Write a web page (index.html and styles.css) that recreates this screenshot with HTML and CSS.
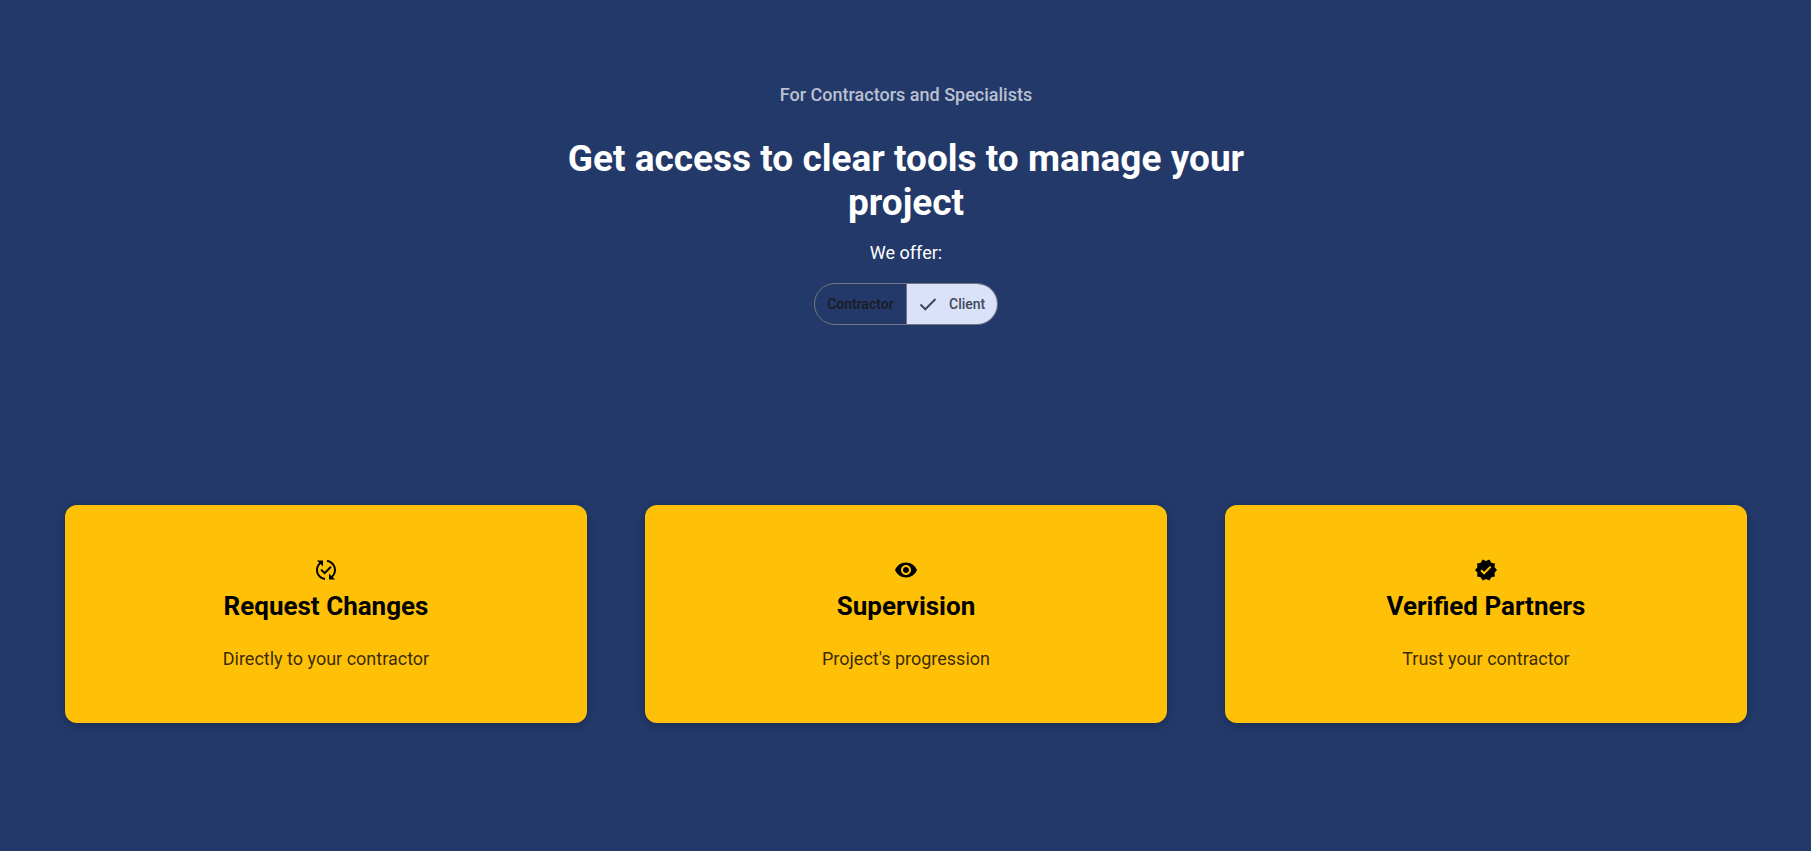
FILE: index.html
```html
<!DOCTYPE html>
<html lang="en">
<head>
<meta charset="utf-8">
<meta name="viewport" content="width=device-width, initial-scale=1">
<title>Tools for contractors and specialists</title>
<link rel="stylesheet" href="styles.css">
</head>
<body>
<main class="features">
  <header class="intro">
    <p class="eyebrow">For Contractors and Specialists</p>
    <h1 class="title">Get access to clear tools to manage your project</h1>
    <p class="offer">We offer:</p>
    <div class="toggle" role="group" aria-label="Audience">
      <button class="toggle-option" type="button" aria-pressed="false">Contractor</button>
      <button class="toggle-option selected" type="button" aria-pressed="true">
        <svg class="check" viewBox="0 0 18 18" aria-hidden="true"><path d="M1.500 9.500l4.800 4.800L16.500 4"/></svg>
        Client
      </button>
    </div>
  </header>
  <section class="cards" aria-label="Features">
    <article class="card">
      <svg class="icon" viewBox="0 0 24 24" aria-hidden="true"><path d="M17.660 9.530l-7.070 7.070-4.240-4.240 1.410-1.410 2.830 2.830 5.660-5.660 1.410 1.410zM4 12c0-2.330 1.020-4.420 2.620-5.880L9 8.500v-6H3l2.200 2.200C3.240 6.520 2 9.110 2 12c0 5.190 3.950 9.450 9 9.950v-2.020c-3.940-.49-7-3.860-7-7.930zm18 0c0-5.190-3.950-9.450-9-9.950v2.020c3.940.49 7 3.860 7 7.930 0 2.330-1.020 4.420-2.620 5.880L15 15.500v6h6l-2.200-2.200c1.960-1.820 3.200-4.410 3.200-7.300z"/></svg>
      <h2 class="card-title">Request Changes</h2>
      <p class="card-text">Directly to your contractor</p>
    </article>
    <article class="card">
      <svg class="icon" viewBox="0 0 24 24" aria-hidden="true"><path d="M12 4.500C7 4.500 2.730 7.610 1 12c1.730 4.390 6 7.500 11 7.500s9.270-3.110 11-7.500c-1.730-4.390-6-7.500-11-7.500zM12 17c-2.760 0-5-2.240-5-5s2.240-5 5-5 5 2.240 5 5-2.240 5-5 5zm0-8c-1.660 0-3 1.340-3 3s1.340 3 3 3 3-1.340 3-3-1.340-3-3-3z"/></svg>
      <h2 class="card-title">Supervision</h2>
      <p class="card-text">Project's progression</p>
    </article>
    <article class="card">
      <svg class="icon" viewBox="0 0 24 24" aria-hidden="true"><path d="M23 12l-2.440-2.790.34-3.690-3.610-.82-1.890-3.200L12 2.960 8.600 1.500 6.710 4.690 3.100 5.500l.34 3.700L1 12l2.440 2.790-.34 3.700 3.610.82L8.600 22.500l3.400-1.470 3.400 1.460 1.890-3.190 3.610-.82-.34-3.690L23 12zm-12.910 4.720l-3.800-3.810 1.480-1.480 2.320 2.330 5.850-5.870 1.480 1.480-7.330 7.350z"/></svg>
      <h2 class="card-title">Verified Partners</h2>
      <p class="card-text">Trust your contractor</p>
    </article>
  </section>
</main>
</body>
</html>
```
FILE: styles.css
```css
* {
  box-sizing: border-box;
}

body {
  margin: 0;
  background: #22396a;
  font-family: Roboto, "Noto Sans", sans-serif;
}

h1,
h2,
p {
  margin: 0;
}

.features {
  padding: 81px 64px 128px 65px;
}

.intro {
  display: flex;
  flex-direction: column;
  align-items: center;
  max-width: 704px;
  margin: 0 auto 180px;
  color: #fff;
  text-align: center;
}

.eyebrow {
  color: rgba(255, 255, 255, 0.7);
  font-size: 18px;
  font-weight: 500;
  line-height: 28px;
}

.title {
  margin-top: 28px;
  font-size: 37px;
  font-weight: 700;
  line-height: 44px;
}

.offer {
  margin-top: 14px;
  font-size: 18px;
  line-height: 28px;
}

.toggle {
  display: grid;
  grid-template-columns: 1fr 1fr;
  margin-top: 16px;
  overflow: hidden;
  border: 1px solid #75777f;
  border-radius: 21px;
}

.toggle-option {
  display: flex;
  align-items: center;
  justify-content: center;
  gap: 12px;
  height: 40px;
  padding: 0 12px;
  border: 0;
  background: transparent;
  color: #1b1b1f;
  font-family: inherit;
  font-size: 14px;
  font-weight: 500;
  cursor: pointer;
}

.toggle-option.selected {
  border-left: 1px solid #75777f;
  background: #dae2f9;
  color: #3f4759;
}

.check {
  width: 18px;
  height: 18px;
  fill: none;
  stroke: currentColor;
  stroke-width: 2;
}

.cards {
  display: grid;
  grid-template-columns: repeat(3, 1fr);
  gap: 58px;
}

.card {
  display: flex;
  flex-direction: column;
  align-items: center;
  padding: 53px 24px 50px;
  border-radius: 12px;
  background: #ffc107;
  box-shadow: 0 2px 8px rgba(0, 0, 0, 0.25);
  color: #000;
  text-align: center;
}

.icon {
  width: 24px;
  height: 24px;
  fill: currentColor;
}

.card-title {
  margin-top: 8px;
  font-size: 26px;
  font-weight: 700;
  line-height: 32px;
}

.card-text {
  margin-top: 23px;
  color: rgba(0, 0, 0, 0.8);
  font-size: 18px;
  line-height: 28px;
}
```
